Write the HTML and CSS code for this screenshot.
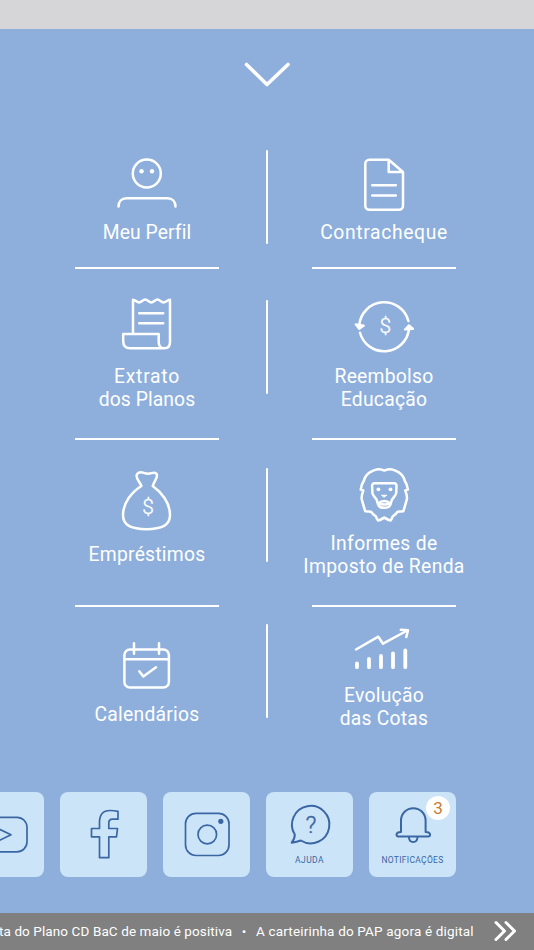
FILE: index.html
```html
<!DOCTYPE html>
<html lang="pt-BR">
<head>
    <meta charset="UTF-8">
    <title>Menu</title>
    <link rel="stylesheet" href="styles.css">
</head>
<body>

    <div class="topbar"></div>

    <main>
        <svg class="chevron" width="50" height="30" viewBox="0 0 50 30"><path d="M4.5 5.5 25 25.5 46 5.5"/></svg>

        <div class="menu">
            <!-- row 1 -->
            <a class="item row1">
                <svg width="64" height="66" viewBox="0 0 64 66">
                    <circle cx="31.8" cy="21.5" r="14"/>
                    <circle class="dot" cx="26.5" cy="19.3" r="2.2"/>
                    <circle class="dot" cx="37" cy="19.3" r="2.2"/>
                    <path d="M3.5 54.5c0-5 3-8.2 8-8.2h41c5 0 8 3.2 8 8.2"/>
                </svg>
                <span class="label perfil">Meu Perfil</span>
            </a>
            <span class="divider row1"></span>
            <a class="item row1">
                <svg width="64" height="66" viewBox="0 0 64 66">
                    <path d="M36.7 7.7H17.3a4 4 0 0 0-4 4v42a4 4 0 0 0 4 4H47a4 4 0 0 0 4-4V20L36.7 7.7V20H51"/>
                    <path d="M20.2 33.3h23.6M20.2 43.5h23.6"/>
                </svg>
                <span class="label contra">Contracheque</span>
            </a>

            <!-- row 2 -->
            <a class="item row2">
                <svg width="64" height="66" viewBox="0 0 64 66">
                    <path d="M18 39V4.800c2.500.2 3.700 2.600 6.100 2.600s3.700-2.800 6.100-2.800 3.700 2.800 6.100 2.800 3.700-2.800 6.100-2.800 3.700 2.800 6.100 2.800 3.600-2.400 6.500-2.600V47c0 4-2.200 6.300-5.700 6.300s-5.600-2.500-5.600-6V39H8.200v7c0 4.600 2.600 7.300 7 7.300h34"/>
                    <path d="M24.200 18.300h24M24.200 28.300h24"/>
                </svg>
                <span class="label extrato"><span class="wide">Extrato</span><br>dos Planos</span>
            </a>
            <span class="divider row2"></span>
            <a class="item row2">
                <svg width="64" height="66" viewBox="0 0 64 66">
                    <path d="M7.300 30A25 25 0 0 1 56.400 26M8 37.700A25 25 0 0 0 57 34"/>
                    <path class="dot" d="M3.700 29.300 11.800 30.500 7.200 33.800zM53 34.500 61 33.800 57 30.300z"/>
                    <text x="33.300" y="38">$</text>
                </svg>
                <span class="label reembolso">Reembolso<br>Educação</span>
            </a>

            <!-- row 3 -->
            <a class="item row3">
                <svg width="64" height="66" viewBox="0 0 64 66">
                    <path d="M26.400 20c-1.600-4-5.400-7.300-4.800-10.700 1-4 5.200-3 8-2.200 2.600.9 4.400.7 7 0 2.700-.7 5.400-.4 5.400 2.400 0 3.200-3.200 6.500-4.300 10.500 8.500 6 17.300 16.500 17.300 29 0 11-9 14.200-23.500 14.200S8 60 8 49c0-12.500 9-23 18.400-29z"/>
                    <text x="33" y="48">$</text>
                </svg>
                <span class="label emprestimos">Empréstimos</span>
            </a>
            <span class="divider row3"></span>
            <a class="item row3">
                <svg class="lion" width="64" height="65" viewBox="0 0 64 65">
                    <path d="M32.300 4.600C29.500 3.500 27.500 3 24.800 3.400 22.500 4 20 5 17.800 6.300 15.500 8 12.700 11 12.200 14 10.500 16.500 9.300 20 8.700 23.600L11.300 24.500C10 28 9.300 30.500 9.700 33 10.500 36 11.500 40 13.300 45.300L19 45.800C20.500 48 22.500 49.500 24 50.500 24.300 52 24.800 53 26 54.400 28.500 54.300 30.500 52.800 32.300 51.500 34.100 52.800 36.100 54.300 38.600 54.400 39.800 53 40.300 52 40.600 50.500 42.100 49.500 44.100 48 45.600 45.800L51.300 45.300C53.100 40 54.100 36 54.900 33 55.300 30.500 54.600 28 53.300 24.500L55.900 23.600C55.300 20 54.100 16.500 52.400 14 51.900 11 49.100 8 46.800 6.300 44.600 5 42.100 4 39.800 3.400 37.100 3 35.100 3.500 32.300 4.600z"/>
                    <path d="M22.500 17.300H42.100c1.600 0 2.500 1 2.400 2.700L44.200 27c-.3 3-3.800 5-4.500 7.500l-1.200 4c-.7 2.200-3.200 3.300-6.200 3.300s-5.500-1.100-6.200-3.300l-1.200-4C24.200 32 20.700 30 20.400 27L20.100 20c-.1-1.700.8-2.700 2.400-2.700z"/>
                    <path d="M26.500 37.300c1.500-1.500 3.500-2.300 5.800-2.300s4.300.8 5.800 2.300c-3.200 1.200-8.400 1.200-11.600 0z"/>
                    <path class="dot nose" d="M29.900 29.300h4.800l-2.400 1.700z"/>
                    <circle class="dot" cx="26.400" cy="23.300" r="1.900"/>
                    <circle class="dot" cx="38.500" cy="23.300" r="1.900"/>
                </svg>
                <span class="label informes">Informes de<br>Imposto de Renda</span>
            </a>

            <!-- row 4 -->
            <a class="item row4">
                <svg width="64" height="66" viewBox="0 0 64 66">
                    <rect x="9.400" y="25.500" width="44.500" height="38" rx="5.500"/>
                    <path d="M9.400 35.200h44.500M19 19.300v10.500M44 19.300v10.500M24.300 47.300l4 5.200 12.700-9.300"/>
                </svg>
                <span class="label calendarios">Calendários</span>
            </a>
            <span class="divider row4"></span>
            <a class="item row4">
                <svg class="chart" width="64" height="58" viewBox="0 0 64 58">
                    <path d="M4 25.500 26.300 12.700 31 19.700 55.300 6.500M48.800 5.800 56 6.200 54.300 13"/>
                    <path class="bars" d="M5 39.500v3.700M17 35v8.200M29 32v11.200M41 29.500v13.700M53.300 26.500v16.700"/>
                </svg>
                <span class="label cotas">Evolução<br>das Cotas</span>
            </a>
        </div>

        <div class="shortcuts">
            <a class="card">
                <svg width="87" height="86" viewBox="0 0 87 86">
                    <rect x="16" y="25.300" width="54" height="34.500" rx="10"/>
                    <path d="M37 34.500v16.500l17-8.200z"/>
                </svg>
            </a>
            <a class="card">
                <svg class="fb" width="87" height="86" viewBox="0 0 87 86">
                    <path d="M39.500 65.700V44.800H31.500V36.500H39.500V30.500C39.500 22 43.500 18.500 50 18.500Q54 18.500 58 19.300V27.200H52.500C49.800 27.200 48.800 28.500 48.800 31V36.500H57.500L56.500 44.800H48.800V65.700z"/>
                </svg>
            </a>
            <a class="card">
                <svg width="87" height="86" viewBox="0 0 87 86">
                    <rect x="22.500" y="21.300" width="43.500" height="42.200" rx="10.500"/>
                    <circle cx="44.300" cy="42.500" r="9.300"/>
                    <circle class="fill" cx="57.800" cy="29.300" r="2.600"/>
                </svg>
            </a>
            <a class="card">
                <svg class="thick" width="87" height="66" viewBox="0 0 87 66">
                    <path d="M28.800 42.500A18.700 18.700 0 1 1 34.800 48.500Q31 50 25.700 50.700C28 48 28.800 45.500 28.800 42.500z"/>
                    <text x="45" y="41.300">?</text>
                </svg>
                <span class="caption">AJUDA</span>
            </a>
            <a class="card">
                <svg class="thick" width="87" height="66" viewBox="0 0 87 66">
                    <path d="M32 40V28.500a12.300 12.300 0 0 1 24.600 0V40c3 .2 4.500 1 4.500 2.600 0 1.400-.8 2-2 2H29.500c-1.200 0-2-.6-2-2 0-1.600 1.500-2.400 4.500-2.600zM40 46c.3 2.600 1.800 4 4.200 4s3.900-1.400 4.200-4"/>
                </svg>
                <span class="caption notif">NOTIFICAÇÕES</span>
                <span class="badge">3</span>
            </a>
        </div>
    </main>

    <footer>
        <p class="news"><span class="news1">ta do Plano CD BaC de maio é positiva</span><span class="bullet">•</span><span class="news2">A carteirinha do PAP agora é digital</span></p>
        <svg width="24" height="22" viewBox="0 0 24 22"><path d="M2 2.500 10.500 11 2 19.500M12 2.500 20.500 11 12 19.500"/></svg>
    </footer>

</body>
</html>
```
FILE: styles.css
```css
* {
    box-sizing: border-box;
}

body {
    margin: 0;
    width: 534px;
    height: 950px;
    overflow: hidden;
    display: flex;
    flex-direction: column;
    font-family: Roboto, "Open Sans", sans-serif;
    background: #8eafdc;
    color: white;
}

svg {
    display: block;
    flex: none;
    fill: none;
    stroke: white;
    stroke-width: 2.5;
    stroke-linecap: round;
    stroke-linejoin: round;
}

.topbar {
    height: 29px;
    background: #d6d6d8;
}

main {
    height: 884px;
    display: flex;
    flex-direction: column;
}

.chevron {
    margin: 30px 0 0 242px;
    stroke-width: 3.6;
}

/* menu grid */
.menu {
    display: grid;
    grid-template-columns: 144px 93px 144px;
    grid-template-rows: 125px 171px 167px 140px;
    margin: 55px 0 0 75px;
}

.item {
    display: flex;
    flex-direction: column;
    align-items: center;
    border-bottom: 2px solid white;
}

.item.row1 { padding-top: 8px; }
.item.row2 { padding-top: 26px; }
.item.row3 { padding-top: 26px; }
.item.row4 { padding-top: 17px; border-bottom: none; }

.divider {
    width: 2px;
    height: 94px;
    margin-left: 47px;
    background: white;
    border-radius: 1px;
}

.divider.row1 { margin-top: 6px; }
.divider.row2 { margin-top: 31px; }
.divider.row3 { margin-top: 28px; }
.divider.row4 { margin-top: 17px; }

.item svg text {
    font-size: 21px;
    font-weight: 300;
    fill: white;
    stroke: white;
    stroke-width: 0.3;
    text-anchor: middle;
}

.item .dot {
    fill: white;
    stroke: none;
}

.item path.dot {
    stroke: white;
    stroke-width: 2.2;
}

.item path.nose {
    stroke-width: 1;
}

.item .bars {
    stroke-width: 3.8;
}

.label {
    font-size: 19.3px;
    line-height: 23px;
    letter-spacing: 0.25px;
    text-align: center;
    white-space: nowrap;
    margin-top: 3px;
}

.label.perfil { letter-spacing: 0.1px; }
.label.contra { letter-spacing: 0.65px; }
.label.extrato,
.label.reembolso { margin-top: 4px; }
.label.extrato { letter-spacing: 0.1px; }
.label.extrato .wide { letter-spacing: 0.75px; }
.label.emprestimos { margin-top: 11px; }
.label.informes { margin-top: 1px; letter-spacing: 0.35px; }
.label.calendarios { margin-top: 13px; }
.label.cotas { margin-top: 2px; }

/* shortcut cards */
.shortcuts {
    display: flex;
    gap: 16px;
    margin: 45px 0 0 -43px;
}

.card {
    position: relative;
    display: flex;
    flex-direction: column;
    align-items: center;
    flex: none;
    width: 87px;
    height: 85px;
    border-radius: 8px;
    background: #cce4f8;
    color: #3a67a3;
}

.card svg {
    stroke: #3a67a3;
    stroke-width: 1.7;
}

.card svg.thick {
    stroke-width: 2;
}

.card text {
    font-size: 24px;
    font-weight: 300;
    fill: #3a67a3;
    stroke-width: 0.4;
    text-anchor: middle;
}

.card .fill {
    fill: #3a67a3;
    stroke: none;
}

.caption {
    font-size: 8.5px;
    line-height: 10px;
    letter-spacing: 0.4px;
    margin-top: -3px;
    white-space: nowrap;
}

.caption.notif {
    letter-spacing: 0.3px;
}

.badge {
    position: absolute;
    top: 4px;
    right: 6px;
    width: 24px;
    height: 24px;
    border-radius: 50%;
    background: white;
    color: #c97a33;
    font-size: 17px;
    line-height: 24px;
    text-align: center;
}

/* news ticker */
footer {
    display: flex;
    align-items: center;
    height: 37px;
    background: #808080;
    overflow: hidden;
}

.news {
    display: flex;
    width: 495px;
    margin: -2px 0 0 -1px;
    font-size: 13.5px;
    line-height: 20px;
    white-space: nowrap;
}

.news1 { width: 233px; letter-spacing: 0.1px; }
.news2 { letter-spacing: 0.17px; }
.bullet { width: 24px; text-align: center; font-size: 13.5px; }

footer svg {
    margin-top: -1px;
    stroke-width: 3;
}
```
